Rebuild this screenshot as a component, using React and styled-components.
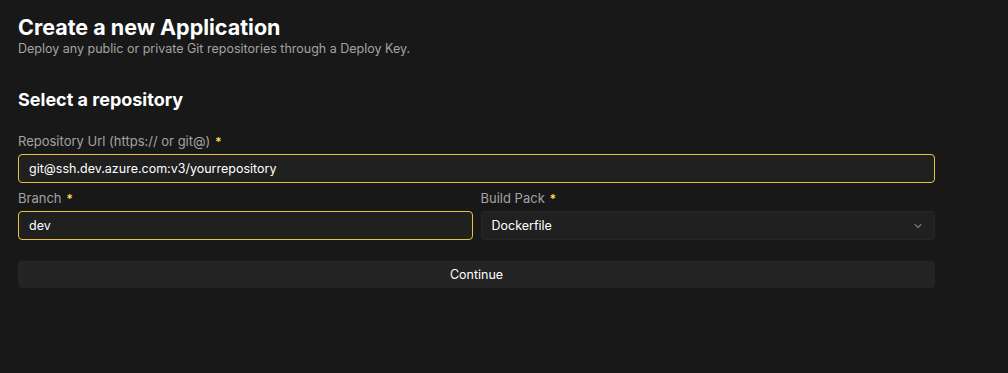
import React from 'react';
import styled, { createGlobalStyle } from 'styled-components';

const Global = createGlobalStyle`
	body {
		margin: 0;
		background: #181818;
		font-family: Inter, "Noto Sans", sans-serif;
	}
`;

const Page = styled.div`
	width: 100%;
	min-height: 373px;
	background: #181818;
	padding: 13px 73px 0 18px;
	box-sizing: border-box;
`;

const Title = styled.h1`
	margin: 0;
	color: #fff;
	font-size: 21.5px;
	font-weight: 700;
	line-height: 28px;
`;

const Subtitle = styled.p`
	margin: 0;
	color: #a3a3a3;
	font-size: 12.5px;
	line-height: 16px;
`;

const Section = styled.h2`
	margin: 31px 0 0;
	color: #fff;
	font-size: 18px;
	font-weight: 700;
	line-height: 24px;
`;

const Form = styled.div`
	display: flex;
	flex-direction: column;
	gap: 6px;
	margin-top: 20px;
`;

const Row = styled.div`
	display: grid;
	grid-template-columns: 1fr 1fr;
	gap: 8px;
`;

const Field = styled.div`
	display: flex;
	flex-direction: column;
	gap: 3px;
`;

const Label = styled.label`
	color: #a3a3a3;
	font-size: 13px;
	line-height: 18px;
	& span {
		color: #fcd34d;
		font-size: 12px;
		font-weight: 700;
		margin-left: 1px;
	}
`;

const Input = styled.input`
	height: 29px;
	box-sizing: border-box;
	background: #202020;
	border: 1px solid #e5c33a;
	border-radius: 4px;
	color: #fff;
	font: 12.5px Inter, sans-serif;
	padding: 0 10px;
	outline: none;
`;

const Select = styled.div`
	height: 29px;
	box-sizing: border-box;
	background: #202020;
	border: 1px solid #262626;
	border-radius: 4px;
	color: #fff;
	font-size: 12.5px;
	padding: 0 10px;
	display: flex;
	align-items: center;
	justify-content: space-between;
`;

const Button = styled.button`
	margin-top: 15px;
	height: 27px;
	background: #242424;
	border: none;
	border-radius: 4px;
	color: #fff;
	font: 12.5px Inter, sans-serif;
	cursor: pointer;
`;

function App() {
	return (
		<Page>
			<Global />
			<Title>Create a new Application</Title>
			<Subtitle>Deploy any public or private Git repositories through a Deploy Key.</Subtitle>
			<Section>Select a repository</Section>
			<Form>
				<Field>
					<Label>Repository Url (https:// or git@) <span>*</span></Label>
					<Input defaultValue="git@ssh.dev.azure.com:v3/yourrepository" />
				</Field>
				<Row>
					<Field>
						<Label>Branch <span>*</span></Label>
						<Input defaultValue="dev" />
					</Field>
					<Field>
						<Label>Build Pack <span>*</span></Label>
						<Select>
							Dockerfile
							<svg width="12" height="12" viewBox="0 0 24 24" fill="none" stroke="#6b7280" strokeWidth="2.5" strokeLinecap="round" strokeLinejoin="round">
								<path d="m6 9 6 6 6-6" />
							</svg>
						</Select>
					</Field>
				</Row>
				<Button>Continue</Button>
			</Form>
		</Page>
	);
}

export default App;
